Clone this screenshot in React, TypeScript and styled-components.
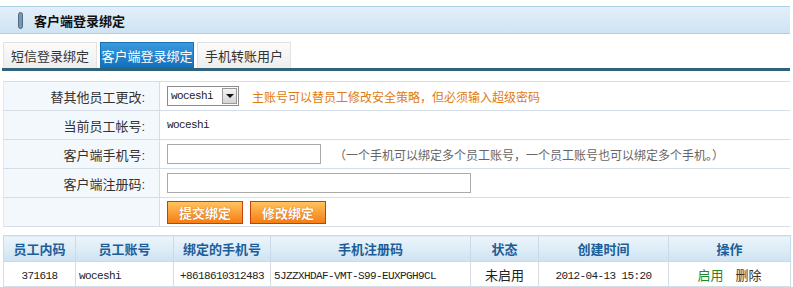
import React from 'react';
import styled, { createGlobalStyle } from 'styled-components';

const GlobalStyle = createGlobalStyle`
  body {
    margin: 0;
    background: #ffffff;
    font-family: 'Liberation Sans', 'Noto Sans CJK SC', sans-serif;
    font-size: 12px;
    color: #333333;
  }
`;

const Page = styled.div`
  width: 790px;
  padding-top: 6px;
`;

const TitleBar = styled.div`
  height: 26px;
  display: flex;
  align-items: center;
  gap: 11px;
  padding-left: 18px;
  border-top: 1px solid #a9d2e8;
  border-bottom: 1px solid #a9d2e8;
  background: linear-gradient(#e3eff9, #cfe3f3);
`;

const Marker = styled.span`
  width: 5px;
  height: 17px;
  border-radius: 3px;
  background: #7b96ae;
  border: 1px solid #4d6a86;
  box-sizing: border-box;
`;

const TitleText = styled.h1`
  margin: 0;
  font-size: 13px;
  font-weight: bold;
  color: #111111;
`;

const TabBar = styled.div`
  display: flex;
  gap: 3px;
  margin: 8px 0 0 2px;
  padding-left: 1px;
  border-bottom: 3px solid #2d6479;
`;

const Tab = styled.div<{ $active?: boolean }>`
  width: 94px;
  height: 26px;
  display: flex;
  align-items: center;
  justify-content: center;
  font-size: 13px;
  border: 1px solid ${(p) => (p.$active ? '#1a6fb0' : '#e2e2e2')};
  border-bottom: none;
  box-sizing: border-box;
  color: ${(p) => (p.$active ? '#ffffff' : '#333333')};
  background: ${(p) =>
    p.$active
      ? 'linear-gradient(#3a9ae0, #0f6fbb)'
      : 'linear-gradient(#fbfbfb, #eeeeee)'};
`;

const FormTable = styled.div`
  margin: 10px 0 0 3px;
  border-top: 1px solid #d5dee6;
`;

const FormRow = styled.div`
  display: grid;
  grid-template-columns: 157px 1fr;
  height: 28px;
  border-bottom: 1px solid #d5dee6;
`;

const Label = styled.div`
  display: flex;
  align-items: center;
  justify-content: flex-end;
  padding-right: 14px;
  background: #f3f8fc;
  border-right: 1px solid #d5dee6;
  border-left: 1px solid #e3eaf0;
  font-size: 13px;
  color: #333333;
`;

const Field = styled.div`
  display: flex;
  align-items: center;
  padding-left: 7px;
  gap: 13px;
`;

const Mono = styled.span`
  font-family: 'Liberation Mono', 'DejaVu Sans Mono', monospace;
  font-size: 11px;
  letter-spacing: -0.6px;
  color: #222222;
  white-space: nowrap;
`;

const SelectBox = styled.div`
  width: 72px;
  height: 20px;
  display: flex;
  align-items: center;
  justify-content: space-between;
  border: 1px solid #8a8a8a;
  box-sizing: border-box;
  padding: 0 1px 0 3px;
  background: #ffffff;
`;

const SelectArrow = styled.span`
  width: 15px;
  height: 16px;
  display: flex;
  align-items: center;
  justify-content: center;
  border: 1px solid #9a9a9a;
  box-sizing: border-box;
  background: linear-gradient(#f4f4f4, #d4d4d4);
  &::after {
    content: '';
    border-left: 4px solid transparent;
    border-right: 4px solid transparent;
    border-top: 4px solid #111111;
  }
`;

const Warn = styled.span`
  color: #e07a12;
  font-size: 12px;
`;

const Hint = styled.span`
  color: #666666;
  font-size: 12px;
`;

const TextInput = styled.input<{ $w: number }>`
  width: ${(p) => p.$w}px;
  height: 20px;
  box-sizing: border-box;
  border: 1px solid #a9a9a9;
  padding: 0 3px;
  margin: 0;
`;

const Buttons = styled.div`
  display: flex;
  gap: 7px;
`;

const OrangeButton = styled.button`
  width: 76px;
  height: 23px;
  padding: 0;
  border: 1px solid #c2420a;
  background: linear-gradient(#ffc45c, #f57d16);
  color: #ffffff;
  font-family: 'Noto Sans CJK SC', sans-serif;
  font-size: 13px;
  font-weight: bold;
  text-shadow: 0 0 1px #b24a00;
`;

const DataTable = styled.table`
  margin: 8px 0 0 3px;
  width: 787px;
  border-collapse: collapse;
  table-layout: fixed;
`;

const Th = styled.th`
  height: 25px;
  padding: 0;
  font-size: 13px;
  font-weight: bold;
  color: #1d5e98;
  border: 1px solid #c9dbe9;
  background: linear-gradient(#ecf5fb, #cfe3f2);
`;

const Td = styled.td<{ $align?: string }>`
  height: 24px;
  padding: 0 3px;
  text-align: ${(p) => p.$align || 'center'};
  border: 1px solid #d5dee6;
  font-size: 13px;
  color: #222222;
  white-space: nowrap;
  overflow: hidden;
`;

const ActionLink = styled.a<{ $green?: boolean }>`
  color: ${(p) => (p.$green ? '#1f8a1f' : '#333333')};
  text-decoration: none;
  margin: 0 6px;
`;

const columns = [
  { title: '员工内码', width: 72 },
  { title: '员工账号', width: 98 },
  { title: '绑定的手机号', width: 97 },
  { title: '手机注册码', width: 200 },
  { title: '状态', width: 68 },
  { title: '创建时间', width: 130 },
  { title: '操作', width: 122 },
];

export default function App() {
  return (
    <Page>
      <GlobalStyle />
      <TitleBar>
        <Marker />
        <TitleText>客户端登录绑定</TitleText>
      </TitleBar>

      <TabBar>
        <Tab>短信登录绑定</Tab>
        <Tab $active>客户端登录绑定</Tab>
        <Tab>手机转账用户</Tab>
      </TabBar>

      <FormTable>
        <FormRow>
          <Label>替其他员工更改:</Label>
          <Field>
            <SelectBox>
              <Mono>woceshi</Mono>
              <SelectArrow />
            </SelectBox>
            <Warn>主账号可以替员工修改安全策略，但必须输入超级密码</Warn>
          </Field>
        </FormRow>
        <FormRow>
          <Label>当前员工帐号:</Label>
          <Field>
            <Mono>woceshi</Mono>
          </Field>
        </FormRow>
        <FormRow>
          <Label>客户端手机号:</Label>
          <Field>
            <TextInput $w={154} />
            <Hint>（一个手机可以绑定多个员工账号，一个员工账号也可以绑定多个手机。）</Hint>
          </Field>
        </FormRow>
        <FormRow>
          <Label>客户端注册码:</Label>
          <Field>
            <TextInput $w={304} />
          </Field>
        </FormRow>
        <FormRow>
          <Label />
          <Field>
            <Buttons>
              <OrangeButton>提交绑定</OrangeButton>
              <OrangeButton>修改绑定</OrangeButton>
            </Buttons>
          </Field>
        </FormRow>
      </FormTable>

      <DataTable>
        <colgroup>
          {columns.map((c) => (
            <col key={c.title} style={{ width: c.width }} />
          ))}
        </colgroup>
        <thead>
          <tr>
            {columns.map((c) => (
              <Th key={c.title}>{c.title}</Th>
            ))}
          </tr>
        </thead>
        <tbody>
          <tr>
            <Td><Mono>371618</Mono></Td>
            <Td $align="left"><Mono>woceshi</Mono></Td>
            <Td><Mono>+8618610312483</Mono></Td>
            <Td $align="left"><Mono>5JZZXHDAF-VMT-S99-EUXPGH9CL</Mono></Td>
            <Td>未启用</Td>
            <Td><Mono>2012-04-13 15:20</Mono></Td>
            <Td>
              <ActionLink $green>启用</ActionLink>
              <ActionLink>删除</ActionLink>
            </Td>
          </tr>
        </tbody>
      </DataTable>
    </Page>
  );
}
